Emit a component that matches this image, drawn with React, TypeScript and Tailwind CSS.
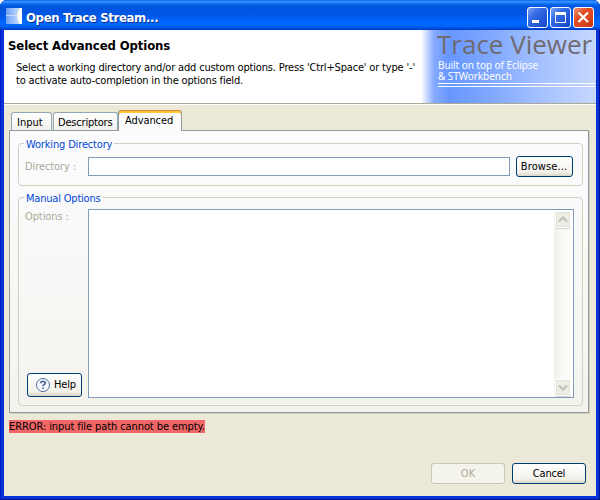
import React from "react";

const ui = "font-['DejaVu_Sans_Condensed','DejaVu_Sans',sans-serif] [font-stretch:condensed]";

function WindowButton({ close, children }: { close?: boolean; children: React.ReactNode }) {
  return (
    <button
      className={
        "h-[21px] w-[21px] rounded-[3px] border border-white " +
        (close
          ? "bg-[linear-gradient(135deg,#ee9479,#e35027_35%,#d6421a_75%,#b93210)]"
          : "bg-[linear-gradient(135deg,#7ba4f4,#356be5_35%,#2257d7_70%,#1744bd)]")
      }
    >
      <svg className="block" width="19" height="19" viewBox="0 0 19 19" fill="none" stroke="white">
        {children}
      </svg>
    </button>
  );
}

function Group({ title, className, titleClass, children }: { title: string; className: string; titleClass: string; children: React.ReactNode }) {
  return (
    <fieldset className={"min-w-0 rounded-[4px] border border-[#d0d0bf] " + className}>
      <legend className={"ml-[5px] h-[14px] px-[2px] leading-[17px] whitespace-nowrap text-[#0046d5] " + titleClass}>{title}</legend>
      {children}
    </fieldset>
  );
}

function ScrollButton({ down }: { down?: boolean }) {
  return (
    <div className="ml-px h-[17px] w-[16px] rounded-[2px] border border-white bg-[#eeeee6] shadow-[inset_0_0_0_1px_#e3e2d8,0_1px_0_#d5d4ca]">
      <svg className="block" width="14" height="15" viewBox="0 0 14 15" fill="none" stroke="#c5c4ba" strokeWidth="2.4">
        <path d={down ? "M3 5.5L7 9.5L11 5.5" : "M3 9.5L7 5.5L11 9.5"} />
      </svg>
    </div>
  );
}

export default function App() {
  return (
    <div className={"h-[500px] w-[600px] overflow-hidden bg-white text-[11px] text-black " + ui}>
      <div className="flex h-full flex-col overflow-hidden rounded-t-[7px] bg-[#0831d9] shadow-[inset_1px_0_#0019cf,inset_-1px_0_#00138c,inset_0_-1px_#00138c]">
        <header className="flex h-[30px] shrink-0 items-center bg-[linear-gradient(180deg,#0058e0_0px,#2b8bff_1px,#3593ff_2px,#0868ee_4px,#0056df_7px,#0055e2_13px,#005cf0_18px,#0068ff_22px,#0066fb_26px,#004fe0_28px,#003ac4_30px)] pl-[6px] pr-[6px]">
          <svg width="16" height="16" viewBox="0 0 16 16" className="mt-[2px] shrink-0">
            <defs>
              <linearGradient id="app" x1="0" x2="1" y1="0" y2="0">
                <stop stopColor="#6b9ff5" />
                <stop offset="1" stopColor="#dbe9ff" />
              </linearGradient>
            </defs>
            <rect width="16" height="16" fill="url(#app)" />
            <path d="M0 7.5H11" stroke="#c4dafc" />
            <path d="M16 0H14Q8 8 14 16H16Z" fill="white" />
          </svg>
          <span className="ml-[4px] mt-[5px] flex-1 whitespace-nowrap text-[13px] font-bold leading-[18px] tracking-[-0.33px] text-white [text-shadow:1px_1px_#0a2e91]">Open Trace Stream...</span>
          <div className="mt-[4px] flex gap-[2px]">
            <WindowButton><path d="M4 13.5H11" strokeWidth="3" /></WindowButton>
            <WindowButton><path d="M4.5 4.5H14.5V14.5H4.5Z" /><path d="M4 5.5H15" strokeWidth="3" /></WindowButton>
            <WindowButton close><path d="M4.5 4.5L14 14M14 4.5L4.5 14" strokeWidth="2.2" /></WindowButton>
          </div>
        </header>

        <div className="mx-[4px] mb-[4px] flex min-h-0 flex-1 flex-col bg-[#ece9d8]">
          <section className="flex h-[75px] shrink-0 border-b-2 border-b-white bg-white">
            <div className="h-[73px] w-[417px] shrink-0 pl-[4px] pt-[8px]">
              <h1 className="whitespace-nowrap text-[13px] font-bold leading-[15px] tracking-[-0.11px]">Select Advanced Options</h1>
              <div className="ml-[8px] mt-[8px] whitespace-nowrap leading-[13px]">
                <p className="tracking-[-0.17px]">Select a working directory and/or add custom options. Press 'Ctrl+Space' or type '-'</p>
                <p className="tracking-[-0.19px]">to activate auto-completion in the options field.</p>
              </div>
            </div>
            <div className="h-[73px] w-[175px] bg-[linear-gradient(90deg,#fff_0px,#86aaff_13px,#6797ff_28px,#80a8ff_70px,#a5c1ff_120px,#c6d8ff_175px)] pl-[16px] font-['Open_Sans',sans-serif] text-white [font-stretch:normal]">
              <div className="h-[29px] whitespace-nowrap text-[26px] leading-[28px] text-[#706b70]">Trace Viewer</div>
              <div className="ml-px mt-px font-['Noto_Sans',sans-serif] text-[10px] leading-[11px] tracking-[-0.06px] whitespace-nowrap">
                <div className="h-[11px]">Built on top of Eclipse</div>
                <div className="h-[11px]">&amp; STWorkbench</div>
              </div>
              <div className="ml-px mt-px h-[4px] w-[157px] border-y border-white" />
            </div>
          </section>
          <div className="-mt-[2px] h-px shrink-0 bg-[#aca899]" />
          <div className="h-px shrink-0 bg-white" />

          <div className="ml-[5px] mt-[5px] flex h-[20px] shrink-0 items-end">
            <div className="ml-[2px] h-[18px] w-[41px] rounded-t-[3px] border border-b-0 border-[#91a7b4] bg-[linear-gradient(#fff,#f0f0ea)] pl-[5px] leading-[19px]">Input</div>
            <div className="ml-px h-[18px] w-[65px] rounded-t-[3px] border border-b-0 border-[#91a7b4] bg-[linear-gradient(#fff,#f0f0ea)] pl-[4px] leading-[19px] tracking-[-0.2px]">Descriptors</div>
            <div className="relative z-10 -mb-px h-[21px] w-[64px] rounded-t-[3px] border border-b-0 border-t-0 border-[#919b9c] bg-[#fcfcfe] shadow-[inset_0_1px_#e68b2c,inset_0_3px_#ffc73c] pl-[6px] leading-[21px] tracking-[-0.1px]">Advanced</div>
          </div>

          <main className="ml-[5px] h-[283px] w-[580px] shrink-0 border border-[#919b9c] bg-[linear-gradient(#fcfcfe,#f4f3ee)] pl-[8px] pt-[5px] shadow-[1px_1px_#d0cebf]">
            <Group title="Working Directory" className="h-[50px] w-[565px]" titleClass="tracking-[-0.16px]">
              <div className="mt-[6px] flex h-[21px] items-center pl-[6px] text-[#aca899]">
                <span className="w-[63px] pt-px leading-[14px] tracking-[-0.1px]">Directory :</span>
                <input className="h-[19px] w-[422px] border border-[#7f9db9] bg-white" />
                <button className="ml-[6px] h-[21px] w-[57px] rounded-[3px] border border-[#003c74] bg-[linear-gradient(#fff,#f2f1ea_80%,#d9d4c6)] pr-px pt-[2px] text-black tracking-[0.1px]">Browse...</button>
              </div>
            </Group>
            <Group title="Manual Options" className="mt-[4px] h-[216px] w-[565px]" titleClass="tracking-[-0.2px]">
              <div className="mt-[5px] flex h-[189px] pl-[6px]">
                <div className="flex w-[63px] flex-col justify-between pb-px">
                  <span className="pt-px leading-[14px] text-[#aca899] tracking-[-0.1px]">Options :</span>
                  <button className="ml-[2px] flex h-[24px] w-[55px] items-center rounded-[3px] border border-[#003c74] bg-[linear-gradient(#fff,#f2f1ea_80%,#d9d4c6)] pl-[7px]">
                    <svg width="16" height="16" viewBox="0 0 16 16" fill="none" stroke="#506b9b">
                      <circle cx="8" cy="8" r="6.5" fill="#f7faff" />
                      <path d="M5.7 6.2Q5.7 4.3 8 4.3Q10.3 4.3 10.3 6Q10.3 7.1 8.8 7.8Q8 8.2 8 9.3M8 10.5V12" strokeWidth="1.7" />
                    </svg>
                    <span className="ml-[3px] pt-px tracking-[-0.2px]">Help</span>
                  </button>
                </div>
                <div className="flex w-[486px] justify-end border border-[#7f9db9] bg-white p-[1px]">
                  <div className="flex w-[18px] flex-col justify-between bg-[linear-gradient(90deg,#f1f1eb,#fff)]"><ScrollButton /><ScrollButton down /></div>
                </div>
              </div>
            </Group>
          </main>

          <div className="ml-[5px] mt-[7px] h-[13px] w-[196px] shrink-0 whitespace-nowrap bg-[#f16666] leading-[14px] tracking-[-0.09px]">ERROR: input file path cannot be empty.</div>
          <footer className="mt-[30px] flex justify-end gap-[7px] pr-[10px]">
            <button className="h-[21px] w-[74px] rounded-[3px] border border-[#c9c7ba] bg-[#f5f4ea] pt-[2px] text-[#aca899]">OK</button>
            <button className="h-[21px] w-[74px] rounded-[3px] border border-[#003c74] bg-[linear-gradient(#fff,#f2f1ea_80%,#d9d4c6)] pt-[2px] tracking-[-0.2px]">Cancel</button>
          </footer>
        </div>
      </div>
    </div>
  );
}
